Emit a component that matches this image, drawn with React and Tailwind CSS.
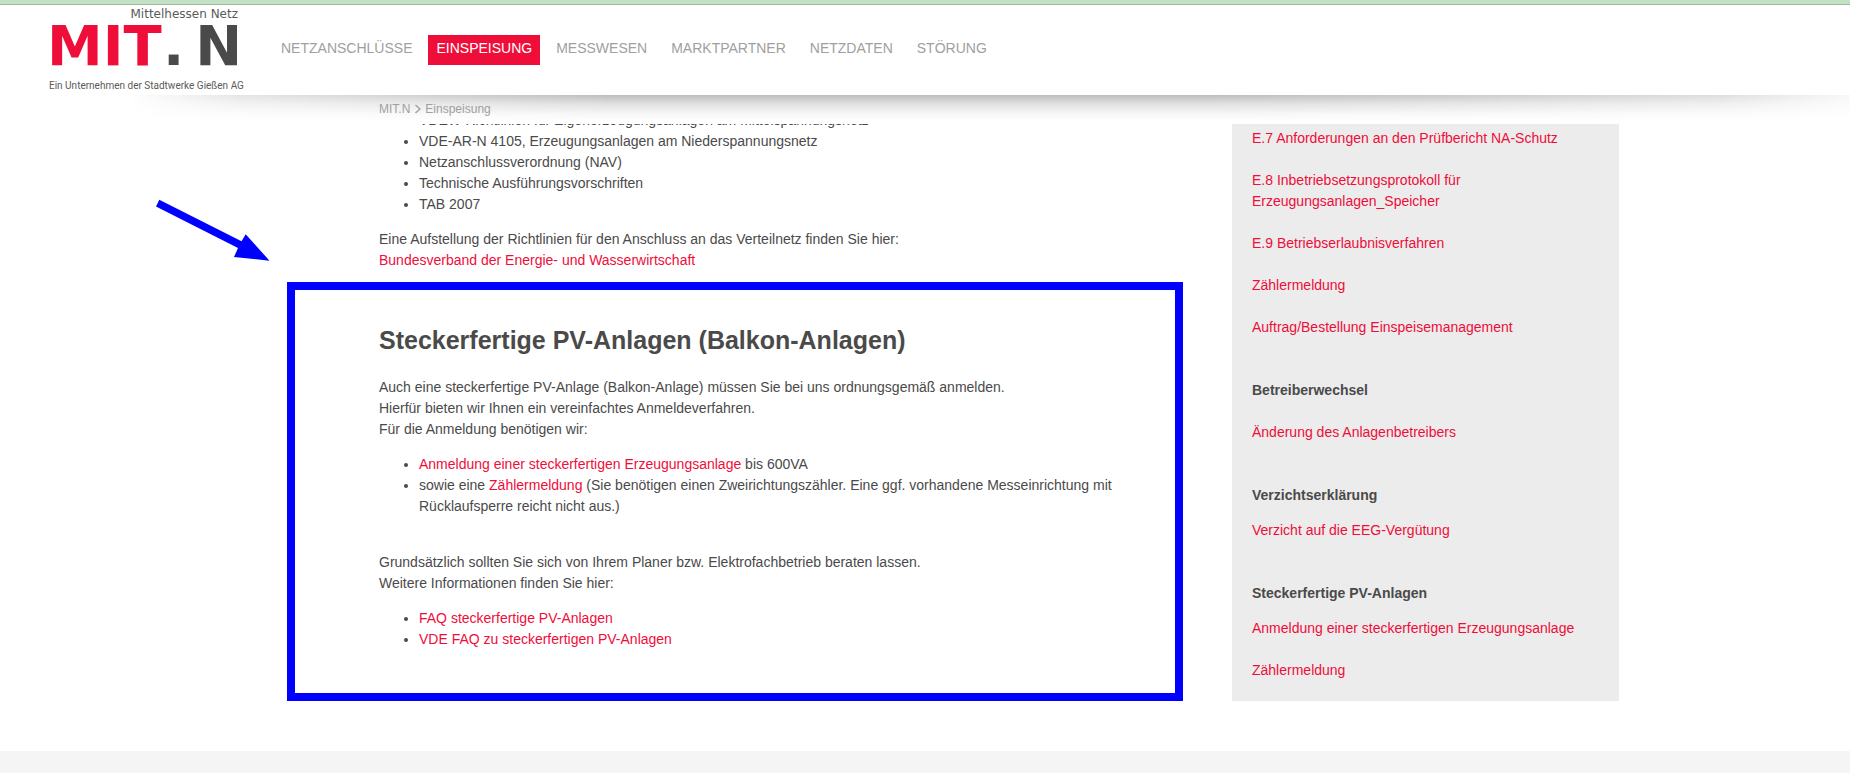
import * as React from "react"
import { clsx } from "clsx"

const navItems = [
    { label: "NETZANSCHLÜSSE" },
    { label: "EINSPEISUNG", active: true },
    { label: "MESSWESEN" },
    { label: "MARKTPARTNER" },
    { label: "NETZDATEN" },
    { label: "STÖRUNG" },
]

const guidelines = [
    "VDEW-Richtlinien für Eigenerzeugungsanlagen am Mittelspannungsnetz",
    "VDE-AR-N 4105, Erzeugungsanlagen am Niederspannungsnetz",
    "Netzanschlussverordnung (NAV)",
    "Technische Ausführungsvorschriften",
    "TAB 2007",
]

const formLinks = [
    "E.7 Anforderungen an den Prüfbericht NA-Schutz",
    "E.8 Inbetriebsetzungsprotokoll für Erzeugungsanlagen_Speicher",
    "E.9 Betriebserlaubnisverfahren",
    "Zählermeldung",
    "Auftrag/Bestellung Einspeisemanagement",
]

function TextLink({ children }) {
    return (
        <a href="#" className="text-[#ef0d3a] hover:underline">
            {children}
        </a>
    )
}

function Logo() {
    return (
        <a href="#" aria-label="MIT.N Mittelhessen Netz" className="shrink-0">
            <svg
                width="192"
                height="90"
                viewBox="0 0 192 90"
                fontFamily="'DejaVu Sans', sans-serif"
                className="overflow-visible"
            >
                <text x="189" y="13" textAnchor="end" fontSize="12" fill="#5a5a5a">Mittelhessen Netz</text>
                <g fontSize="56" fontWeight="700">
                    <text x="-2" y="60" fill="#ef0d3a">MIT</text>
                    <text x="114" y="60" fill="#4a4a4a">.</text>
                    <text x="193" y="60" textAnchor="end" fill="#4a4a4a">N</text>
                </g>
                <text x="0" y="84" fontSize="10" fontFamily="Roboto, sans-serif" fill="#5a5a5a">
                    Ein Unternehmen der Stadtwerke Gießen AG
                </text>
            </svg>
        </a>
    )
}

function Header() {
    return (
        <header className="flex items-center bg-white pl-[49px]">
            <Logo />
            <nav className="ml-8 flex flex-wrap gap-2">
                {navItems.map((item) => (
                    <a
                        key={item.label}
                        href="#"
                        className={clsx(
                            "px-2 pt-[3px] pb-[6px]",
                            item.active ? "bg-[#ef0d3a] text-white" : "text-[#a0a0a0]"
                        )}
                    >
                        {item.label}
                    </a>
                ))}
            </nav>
        </header>
    )
}

function Breadcrumb() {
    return (
        <div className="relative">
            {/* header shadow, fades out to both sides */}
            <div className="absolute inset-0 bg-[linear-gradient(to_bottom,rgba(0,0,0,0.26),rgba(0,0,0,0.12)_30%,rgba(0,0,0,0.03)_65%,transparent_90%)] [mask-image:linear-gradient(to_right,transparent_7%,rgba(0,0,0,0.4)_13%,black_33%,black_65%,rgba(0,0,0,0.8)_78%,rgba(0,0,0,0.5)_93%,rgba(0,0,0,0.1)_100%)]" />
            <nav aria-label="Breadcrumb" className="relative mx-auto flex h-[29px] max-w-[1388px] items-center gap-1 pb-[2px] pl-[148px] text-xs text-[#a0a0a0]">
                <a href="#">MIT.N</a>
                <svg width="7" height="10" viewBox="0 0 7 10" fill="none" stroke="currentColor" strokeWidth="1.4">
                    <path d="M1.5 1 6 5 1.5 9" />
                </svg>
                <a href="#">Einspeisung</a>
            </nav>
        </div>
    )
}

function Arrow() {
    return (
        <svg className="absolute -top-[92px] -left-[140px]" width="116" height="64" viewBox="0 0 116 64" fill="#0000ff">
            <path d="M4.3 1.7 86.5 43.3 90.7 36.3 114.5 62.7 79 59 83 50 1 8.5Z" />
        </svg>
    )
}

function Highlight() {
    return (
        <section className="relative mt-[11px] border-8 border-[#0000ff] pt-[35px] pr-[50px] pb-[43px] pl-[84px]">
            <Arrow />
            <h2 className="mb-[22px] text-[25px] leading-[30px] font-bold">
                Steckerfertige PV-Anlagen (Balkon-Anlagen)
            </h2>
            <p>
                Auch eine steckerfertige PV-Anlage (Balkon-Anlage) müssen Sie bei uns ordnungsgemäß anmelden.
                <br />
                Hierfür bieten wir Ihnen ein vereinfachtes Anmeldeverfahren.
                <br />
                Für die Anmeldung benötigen wir:
            </p>
            <ul className="mt-[14px] list-disc pl-10">
                <li>
                    <TextLink>Anmeldung einer steckerfertigen Erzeugungsanlage</TextLink> bis 600VA
                </li>
                <li>
                    sowie eine <TextLink>Zählermeldung</TextLink> (Sie benötigen einen Zweirichtungszähler. Eine
                    ggf. vorhandene Messeinrichtung mit Rücklaufsperre reicht nicht aus.)
                </li>
            </ul>
            <p className="mt-[35px]">
                Grundsätzlich sollten Sie sich von Ihrem Planer bzw. Elektrofachbetrieb beraten lassen.
                <br />
                Weitere Informationen finden Sie hier:
            </p>
            <ul className="mt-[14px] list-disc pl-10">
                <li><TextLink>FAQ steckerfertige PV-Anlagen</TextLink></li>
                <li><TextLink>VDE FAQ zu steckerfertigen PV-Anlagen</TextLink></li>
            </ul>
        </section>
    )
}

function Sidebar() {
    return (
        <aside className="w-[387px] shrink-0 bg-[#ececec] px-5 pt-1 pb-5">
            <ul className="flex flex-col gap-[21px]">
                {formLinks.map((label) => (
                    <li key={label}><TextLink>{label}</TextLink></li>
                ))}
            </ul>

            <h3 className="mt-[42px] font-bold">Betreiberwechsel</h3>
            <p className="mt-[21px]"><TextLink>Änderung des Anlagenbetreibers</TextLink></p>

            <h3 className="mt-[42px] font-bold">Verzichtserklärung</h3>
            <p className="mt-[14px]"><TextLink>Verzicht auf die EEG-Vergütung</TextLink></p>

            <h3 className="mt-[42px] font-bold">Steckerfertige PV-Anlagen</h3>
            <p className="mt-[14px]"><TextLink>Anmeldung einer steckerfertigen Erzeugungsanlage</TextLink></p>
            <p className="mt-[21px]"><TextLink>Zählermeldung</TextLink></p>
        </aside>
    )
}

export default function App() {
    return (
        <div className="flex min-h-screen flex-col bg-white font-['Liberation_Sans',Arial,sans-serif] text-[14px] leading-[21px] text-[#4a4a4a]">
            <div className="h-[5px] border-b border-[#9fb79f] bg-[#c3e2c3]" />
            <Header />
            <Breadcrumb />

            {/* content is scrolled, the first list entry is cut off by the bar above */}
            <main className="overflow-hidden pb-[50px]">
                <div className="mx-auto flex max-w-[1388px] gap-[49px]">
                    <div className="-mt-[14px] flex-1 pl-14">
                        <div className="pl-[92px]">
                            <ul className="list-disc pl-10">
                                {guidelines.map((item) => (
                                    <li key={item}>{item}</li>
                                ))}
                            </ul>
                            <p className="mt-[14px]">
                                Eine Aufstellung der Richtlinien für den Anschluss an das Verteilnetz finden Sie hier:
                                <br />
                                <TextLink>Bundesverband der Energie- und Wasserwirtschaft</TextLink>
                            </p>
                        </div>
                        <Highlight />
                    </div>
                    <Sidebar />
                </div>
            </main>

            <footer className="flex-1 bg-[#f5f5f5]" />
        </div>
    )
}
